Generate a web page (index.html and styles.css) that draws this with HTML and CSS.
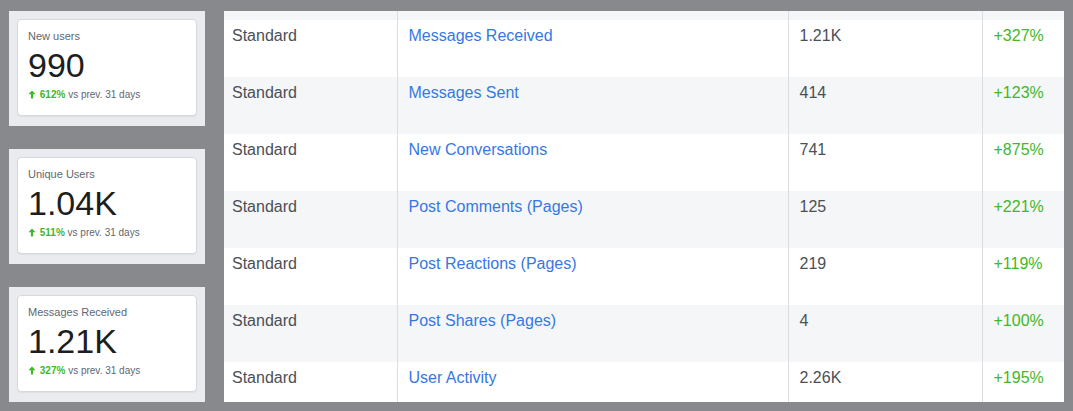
FILE: index.html
```html
<!DOCTYPE html>
<html lang="en">
<head>
    <meta charset="UTF-8">
    <meta name="viewport" content="width=device-width, initial-scale=1.0">
    <title>Messenger Insights</title>
    <link rel="stylesheet" href="styles.css">
</head>
<body>
    <div class="page">
        <aside class="stats">
            <div class="panel">
                <div class="card">
                    <div class="label">New users</div>
                    <div class="value">990</div>
                    <div class="trend">
                        <svg class="arrow" width="8" height="9" viewBox="0 0 8 9"><path d="M4 0.5 L7.6 4.3 H5.1 V8.6 H2.9 V4.3 H0.4 Z" fill="#42b72a"/></svg>
                        <b>612%</b> vs prev. 31 days
                    </div>
                </div>
            </div>
            <div class="panel">
                <div class="card">
                    <div class="label">Unique Users</div>
                    <div class="value">1.04K</div>
                    <div class="trend">
                        <svg class="arrow" width="8" height="9" viewBox="0 0 8 9"><path d="M4 0.5 L7.6 4.3 H5.1 V8.6 H2.9 V4.3 H0.4 Z" fill="#42b72a"/></svg>
                        <b>511%</b> vs prev. 31 days
                    </div>
                </div>
            </div>
            <div class="panel">
                <div class="card">
                    <div class="label">Messages Received</div>
                    <div class="value">1.21K</div>
                    <div class="trend">
                        <svg class="arrow" width="8" height="9" viewBox="0 0 8 9"><path d="M4 0.5 L7.6 4.3 H5.1 V8.6 H2.9 V4.3 H0.4 Z" fill="#42b72a"/></svg>
                        <b>327%</b> vs prev. 31 days
                    </div>
                </div>
            </div>
        </aside>

        <div class="table-wrap">
            <table class="metrics">
                <tr class="cut"><td></td><td></td><td></td><td></td></tr>
                <tr><td>Standard</td><td><a href="#">Messages Received</a></td><td>1.21K</td><td class="up">+327%</td></tr>
                <tr><td>Standard</td><td><a href="#">Messages Sent</a></td><td>414</td><td class="up">+123%</td></tr>
                <tr><td>Standard</td><td><a href="#">New Conversations</a></td><td>741</td><td class="up">+875%</td></tr>
                <tr><td>Standard</td><td><a href="#">Post Comments (Pages)</a></td><td>125</td><td class="up">+221%</td></tr>
                <tr><td>Standard</td><td><a href="#">Post Reactions (Pages)</a></td><td>219</td><td class="up">+119%</td></tr>
                <tr><td>Standard</td><td><a href="#">Post Shares (Pages)</a></td><td>4</td><td class="up">+100%</td></tr>
                <tr><td>Standard</td><td><a href="#">User Activity</a></td><td>2.26K</td><td class="up">+195%</td></tr>
            </table>
        </div>
    </div>
</body>
</html>
```

FILE: styles.css
```css
body {
    margin: 0;
    background-color: #88898d;
    font-family: "Liberation Sans", Arial, sans-serif;
}
.page {
    display: flex;
    gap: 19px;
    padding: 11px 0 0 9px;
}
.stats {
    display: flex;
    flex-direction: column;
    gap: 23px;
    width: 196px;
}
.panel {
    background-color: #e9ebee;
    padding: 8px 8px 10px;
}
.card {
    background-color: #fff;
    border: 1px solid #d5d8dd;
    border-radius: 4px;
    box-shadow: 0 1px 1px rgba(0, 0, 0, 0.05);
    padding: 10px 10px 9px;
    height: 76px;
}
.label {
    font-size: 11px;
    line-height: 13px;
    color: #606770;
}
.value {
    margin-top: 3px;
    font-size: 34px;
    line-height: 38px;
    color: #1c1e21;
}
.trend {
    margin-top: 5px;
    font-size: 10px;
    line-height: 12px;
    color: #606770;
}
.trend b {
    color: #42b72a;
}
.arrow {
    vertical-align: -1px;
    margin-right: 1px;
}
.table-wrap {
    width: 840px;
    height: 391px;
    overflow: hidden;
    background-color: #fff;
}
.metrics {
    width: 840px;
    border-collapse: collapse;
    font-size: 16px;
    line-height: 19px;
    color: #4b4f56;
}
.metrics td {
    height: 57px;
    padding: 6px 10px 0 11px;
    vertical-align: top;
    box-sizing: border-box;
    border-left: 1px solid #dadde1;
}
.metrics td:first-child {
    border-left: none;
    width: 173px;
    padding-left: 8px;
}
.metrics td:nth-child(2) {
    width: 391px;
}
.metrics td:nth-child(3) {
    width: 194px;
}
.metrics tr:nth-child(odd) {
    background-color: #f5f6f7;
}
.metrics tr.cut td {
    height: 9px;
    padding: 0;
}
.metrics a {
    color: #3578e5;
    text-decoration: none;
}
.metrics .up {
    color: #42b72a;
}
```
